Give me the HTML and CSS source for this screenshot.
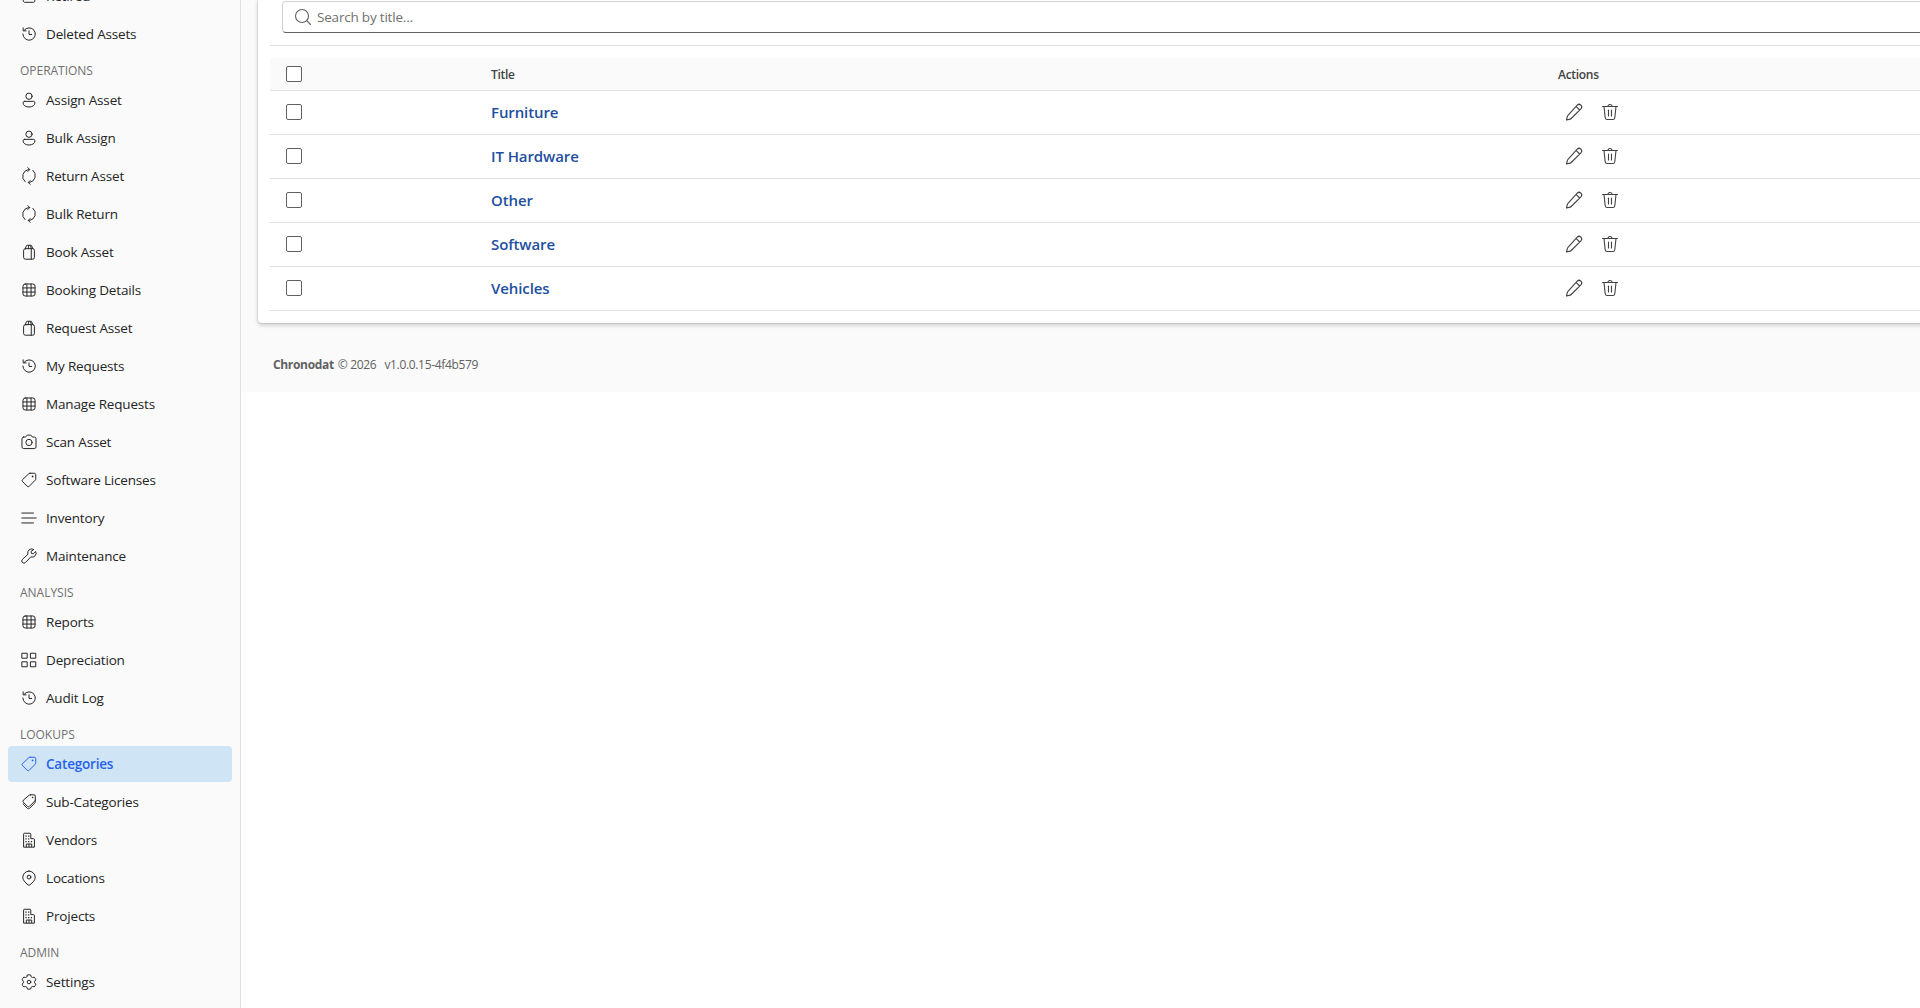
FILE: index.html
```html
<!DOCTYPE html>
<html lang="en">
<head>
  <meta charset="UTF-8">
  <title>Categories - Chronodat</title>
  <link rel="stylesheet" href="styles.css">
</head>
<body>
  <svg class="sprite">
    <symbol id="i-archive" viewBox="0 0 20 20"><path d="M3 3.500h14V7H3zM3.500 7v7.500A2.500 2.500 0 0 0 5 17h10a2 2 0 0 0 1.500-2.500V7M8 10h4"/></symbol>
    <symbol id="i-history" viewBox="0 0 20 20"><path d="M4.500 6A6.900 6.900 0 1 1 3.200 10M3.500 3.200v3.300h3.300M10 6.500v4h3"/></symbol>
    <symbol id="i-person" viewBox="0 0 20 20"><circle cx="10" cy="5.800" r="3.500"/><path d="M5 11.500h10a1.600 1.600 0 0 1 1.600 1.600c0 3-3 4.700-6.600 4.700s-6.600-1.700-6.600-4.700A1.600 1.600 0 0 1 5 11.500z"/></symbol>
    <symbol id="i-sync" viewBox="0 0 20 20"><path d="M5.600 16.300A7.800 7.800 0 0 1 9.500 2.800h1M14.400 3.700A7.800 7.800 0 0 1 10.500 17.200h-1M8.700.7l2.100 2.100-2.100 2.200M11.300 15l-2.100 2.200 2.100 2.100"/></symbol>
    <symbol id="i-box" viewBox="0 0 20 20"><path d="M6 6.300h8a2 2 0 0 1 2 2V16a2 2 0 0 1-2 2H6a2 2 0 0 1-2-2V8.300a2 2 0 0 1 2-2zM5.800 6.300L7 3.200c.1-.4.400-.7.900-.7h4.200c.5 0 .8.300.9.700l1.200 3.100M9 6.300l.8-3.500M11.800 3l.7 3.300V18"/></symbol>
    <symbol id="i-table" viewBox="0 0 20 20"><rect x="3.300" y="3.300" width="13.400" height="13.400" rx="2.500"/><path d="M7.700 3.300v13.400M12.300 3.300v13.400M3.300 7.700h13.400M3.300 12.300h13.400"/></symbol>
    <symbol id="i-camera" viewBox="0 0 20 20"><path d="M4 4.500h2.200l1-1.500c.2-.4.500-.6 1-.6h3.600c.5 0 .8.200 1 .6l1 1.500H16a1.800 1.800 0 0 1 1.800 1.800V15.500a1.800 1.800 0 0 1-1.800 1.800H4a1.800 1.800 0 0 1-1.800-1.800V6.300A1.800 1.800 0 0 1 4 4.500z"/><circle cx="10" cy="10.500" r="3.500"/></symbol>
    <symbol id="i-tag" viewBox="0 0 20 20"><path d="M11.200 2.500h4.800a1.500 1.500 0 0 1 1.500 1.500v4.800c0 .5-.2 1-.6 1.400l-6.600 6.700a1.700 1.700 0 0 1-2.400 0l-5-5a1.700 1.700 0 0 1 0-2.400l6.900-6.500c.4-.3.900-.5 1.400-.5z"/><circle class="dot" cx="14" cy="6" r="1"/></symbol>
    <symbol id="i-tags" viewBox="0 0 20 20"><path d="M11.500 2h4A1.500 1.500 0 0 1 17 3.500v4c0 .5-.2 1-.6 1.400l-5.800 5.900a1.700 1.700 0 0 1-2.400 0l-4.400-4.500a1.700 1.700 0 0 1 0-2.400l6.300-5.400c.4-.3.900-.5 1.400-.5zM3.500 12c0 .3.200.6.500.9l4 4c.8.800 2 .8 2.800 0l5.600-5.700c.4-.4.600-.9.600-1.400V7.500"/><circle class="dot" cx="14" cy="5" r=".9"/></symbol>
    <symbol id="i-lines" viewBox="0 0 20 20"><path d="M2 4.500h13M2 10h16M2 15.500h13"/></symbol>
    <symbol id="i-wrench" viewBox="0 0 20 20"><path d="M15 2.600a4.300 4.300 0 0 0-6.100 5.300L2.700 13.800a2.300 2.300 0 0 0 3.400 3.400l6-6.200a4.300 4.300 0 0 0 5.300-6l-2.600 2.500-2-.3-.4-2z"/></symbol>
    <symbol id="i-grid" viewBox="0 0 20 20"><path d="M2.500 2.500h5.500V8H2.500zM12 2.500h5.500V8H12zM2.500 12h5.500v5.500H2.500zM12 12h5.500v5.500H12z"/></symbol>
    <symbol id="i-building" viewBox="0 0 20 20"><path d="M4 17.500v-14a1 1 0 0 1 1-1h6a1 1 0 0 1 1 1v5h3a1 1 0 0 1 1 1v8zM7 17.500v-3h6v3M10 14.500v3"/><path class="dot" d="M6 5h1.400v1.400H6zM9 5h1.400v1.400H9zM6 8h1.400v1.400H6zM9 8h1.400v1.400H9zM6 11h1.400v1.400H6zM9 11h1.400v1.400H9zM12 11h1.400v1.400H12z"/></symbol>
    <symbol id="i-pin" viewBox="0 0 20 20"><path d="M10 2.300a6.900 6.900 0 0 1 6.900 6.900c0 3-2.200 5.500-5.900 8.500a1.600 1.600 0 0 1-2 0c-3.700-3-5.900-5.500-5.900-8.500A6.900 6.900 0 0 1 10 2.300z"/><circle cx="10" cy="9" r="2.100"/></symbol>
    <symbol id="i-gear" viewBox="0 0 20 20"><path d="M8.200 2.200q1.800-.4 3.600 0l.56 1.960 1.520.88 1.970-.5q1.200 1.300 1.800 3.120L16.200 9.100v1.800l1.450 1.440q-.6 1.800-1.800 3.120l-1.970-.5-1.520.88-.56 1.960q-1.800.4-3.600 0l-.56-1.960-1.520-.88-1.970.5q-1.200-1.300-1.800-3.120L3.800 10.900V9.100L2.350 7.660q.6-1.800 1.800-3.120l1.970.5 1.520-.88z"/><circle cx="10" cy="10" r="2"/></symbol>
    <symbol id="i-search" viewBox="0 0 20 20"><circle cx="9" cy="9" r="6.500"/><path d="M13.700 13.700l3.800 3.800"/></symbol>
    <symbol id="i-edit" viewBox="0 0 20 20"><path d="M13.200 3.100a2.600 2.600 0 0 1 3.700 3.700l-9.700 9.700c-.3.300-.6.500-1 .6l-3.700.9.900-3.700c.1-.4.300-.7.600-1zM12 4.300L15.700 8"/></symbol>
    <symbol id="i-delete" viewBox="0 0 20 20"><path d="M2.500 4.500h15M8 4.500a2 2 0 0 1 4 0M4 4.500l1.200 11.200a2 2 0 0 0 2 1.800h5.600a2 2 0 0 0 2-1.800L16 4.500M8.500 8v6M11.500 8v6"/></symbol>
  </svg>

  <div class="layout">
    <aside class="sidebar">
      <nav class="nav">
        <a class="nav-item"><svg class="icon"><use href="#i-archive"/></svg><span>Retired</span></a>
        <a class="nav-item"><svg class="icon"><use href="#i-history"/></svg><span>Deleted Assets</span></a>
        <div class="nav-heading">OPERATIONS</div>
        <a class="nav-item"><svg class="icon"><use href="#i-person"/></svg><span>Assign Asset</span></a>
        <a class="nav-item"><svg class="icon"><use href="#i-person"/></svg><span>Bulk Assign</span></a>
        <a class="nav-item"><svg class="icon"><use href="#i-sync"/></svg><span>Return Asset</span></a>
        <a class="nav-item"><svg class="icon"><use href="#i-sync"/></svg><span>Bulk Return</span></a>
        <a class="nav-item"><svg class="icon"><use href="#i-box"/></svg><span>Book Asset</span></a>
        <a class="nav-item"><svg class="icon"><use href="#i-table"/></svg><span>Booking Details</span></a>
        <a class="nav-item"><svg class="icon"><use href="#i-box"/></svg><span>Request Asset</span></a>
        <a class="nav-item"><svg class="icon"><use href="#i-history"/></svg><span>My Requests</span></a>
        <a class="nav-item"><svg class="icon"><use href="#i-table"/></svg><span>Manage Requests</span></a>
        <a class="nav-item"><svg class="icon"><use href="#i-camera"/></svg><span>Scan Asset</span></a>
        <a class="nav-item"><svg class="icon"><use href="#i-tag"/></svg><span>Software Licenses</span></a>
        <a class="nav-item"><svg class="icon"><use href="#i-lines"/></svg><span>Inventory</span></a>
        <a class="nav-item"><svg class="icon"><use href="#i-wrench"/></svg><span>Maintenance</span></a>
        <div class="nav-heading">ANALYSIS</div>
        <a class="nav-item"><svg class="icon"><use href="#i-table"/></svg><span>Reports</span></a>
        <a class="nav-item"><svg class="icon"><use href="#i-grid"/></svg><span>Depreciation</span></a>
        <a class="nav-item"><svg class="icon"><use href="#i-history"/></svg><span>Audit Log</span></a>
        <div class="nav-heading">LOOKUPS</div>
        <a class="nav-item active"><svg class="icon"><use href="#i-tag"/></svg><span>Categories</span></a>
        <a class="nav-item"><svg class="icon"><use href="#i-tags"/></svg><span>Sub-Categories</span></a>
        <a class="nav-item"><svg class="icon"><use href="#i-building"/></svg><span>Vendors</span></a>
        <a class="nav-item"><svg class="icon"><use href="#i-pin"/></svg><span>Locations</span></a>
        <a class="nav-item"><svg class="icon"><use href="#i-building"/></svg><span>Projects</span></a>
        <div class="nav-heading">ADMIN</div>
        <a class="nav-item"><svg class="icon"><use href="#i-gear"/></svg><span>Settings</span></a>
      </nav>
    </aside>

    <main class="main">
      <div class="page">
        <section class="card">
          <div class="toolbar">
            <label class="search">
              <svg class="icon"><use href="#i-search"/></svg>
              <input type="text" placeholder="Search by title...">
            </label>
          </div>
          <div class="table">
            <div class="row head">
              <div><span class="checkbox"></span></div>
              <div>Title</div>
              <div>Actions</div>
            </div>
            <div class="row">
              <div><span class="checkbox"></span></div>
              <div><a class="title">Furniture</a></div>
              <div class="actions"><svg class="icon"><use href="#i-edit"/></svg><svg class="icon"><use href="#i-delete"/></svg></div>
            </div>
            <div class="row">
              <div><span class="checkbox"></span></div>
              <div><a class="title">IT Hardware</a></div>
              <div class="actions"><svg class="icon"><use href="#i-edit"/></svg><svg class="icon"><use href="#i-delete"/></svg></div>
            </div>
            <div class="row">
              <div><span class="checkbox"></span></div>
              <div><a class="title">Other</a></div>
              <div class="actions"><svg class="icon"><use href="#i-edit"/></svg><svg class="icon"><use href="#i-delete"/></svg></div>
            </div>
            <div class="row">
              <div><span class="checkbox"></span></div>
              <div><a class="title">Software</a></div>
              <div class="actions"><svg class="icon"><use href="#i-edit"/></svg><svg class="icon"><use href="#i-delete"/></svg></div>
            </div>
            <div class="row">
              <div><span class="checkbox"></span></div>
              <div><a class="title">Vehicles</a></div>
              <div class="actions"><svg class="icon"><use href="#i-edit"/></svg><svg class="icon"><use href="#i-delete"/></svg></div>
            </div>
          </div>
        </section>
        <footer class="footer"><b>Chronodat</b><span class="year">© 2026</span><span class="version">v1.0.0.15-4f4b579</span></footer>
      </div>
    </main>
  </div>
</body>
</html>
```
FILE: styles.css
```css
* {
  box-sizing: border-box;
}
body, html {
  margin: 0;
  padding: 0;
  height: 100%;
  overflow: hidden;
  background: #fff;
  font-family: 'Segoe UI', 'Open Sans', sans-serif;
  color: #242424;
}
.sprite {
  display: none;
}
.icon {
  flex: none;
  width: 18px;
  height: 18px;
  fill: none;
  stroke: currentColor;
  stroke-width: 1.1;
  stroke-linejoin: round;
  stroke-linecap: round;
}
.dot {
  fill: currentColor;
  stroke: none;
}
.layout {
  display: flex;
  height: 100%;
}

/* sidebar */
.sidebar {
  flex: none;
  width: 241px;
  background: #fafafa;
  border-right: 1px solid #e0e0e0;
  overflow: hidden;
}
.nav {
  margin-top: -22px;
  padding: 0 8px;
}
.nav-item {
  display: flex;
  align-items: center;
  gap: 8px;
  height: 36px;
  margin-bottom: 2px;
  padding: 0 12px;
  border-radius: 4px;
  font-size: 13.5px;
  letter-spacing: -0.17px;
  white-space: nowrap;
}
.nav-item.active {
  background: #cfe4f4;
  color: #2563eb;
  font-weight: 600;
  letter-spacing: -0.2px;
}
.nav-heading {
  height: 28px;
  padding: 9px 12px 0;
  font-size: 12px;
  line-height: 16px;
  letter-spacing: -0.02px;
  color: #707070;
}

/* content */
.main {
  flex: 1;
  min-width: 0;
  overflow: hidden;
}
.page {
  width: 1900px;
  height: 392px;
  padding-left: 17px;
  background: #fafafa;
}
.card {
  height: 323px;
  padding: 1px 12px 0;
  background: #fff;
  border-radius: 0 0 4px 4px;
  box-shadow: 0 0 2px rgba(0, 0, 0, 0.2), 0 2px 4px rgba(0, 0, 0, 0.2);
}
.toolbar {
  padding: 0 12px 12px;
  border-bottom: 1px solid #e0e0e0;
}
.search {
  display: flex;
  align-items: center;
  gap: 4px;
  height: 32px;
  padding: 0 10px;
  border: 1px solid #d1d1d1;
  border-bottom-color: #616161;
  border-radius: 4px;
  color: #616161;
}
.search .icon {
  width: 20px;
  height: 20px;
}
.search input {
  flex: 1;
  border: none;
  outline: none;
  padding: 0;
  background: none;
  font: 13.5px 'Segoe UI', 'Open Sans', sans-serif;
  letter-spacing: -0.2px;
}
.search input::placeholder {
  color: #707070;
}
.table {
  margin-top: 12px;
}
.row {
  display: grid;
  grid-template-columns: 213px 1067px 1fr;
  align-items: center;
  height: 44px;
  padding: 0 0 2px 8px;
  border-bottom: 1px solid #e0e0e0;
}
.row > div:first-child {
  padding-left: 8px;
}
.row.head {
  height: 33px;
  padding-bottom: 0;
  background: #fafafa;
  font-size: 12px;
  font-weight: 600;
  letter-spacing: -0.3px;
  color: #424242;
}
.checkbox {
  display: block;
  width: 16px;
  height: 16px;
  border: 1px solid #616161;
  border-radius: 2px;
  background: #fff;
}
.title {
  color: #1e4fa0;
  font-size: 15px;
  font-weight: 600;
  letter-spacing: -0.1px;
}
.actions {
  display: flex;
  gap: 16px;
  padding-left: 6px;
  color: #424242;
}
.actions .icon {
  width: 20px;
  height: 20px;
}
.footer {
  display: flex;
  margin-top: 34px;
  padding-left: 15px;
  font-size: 12px;
  line-height: 16px;
  letter-spacing: -0.33px;
  color: #616161;
}
.year {
  margin-left: 4px;
}
.version {
  margin-left: 8px;
}
```
